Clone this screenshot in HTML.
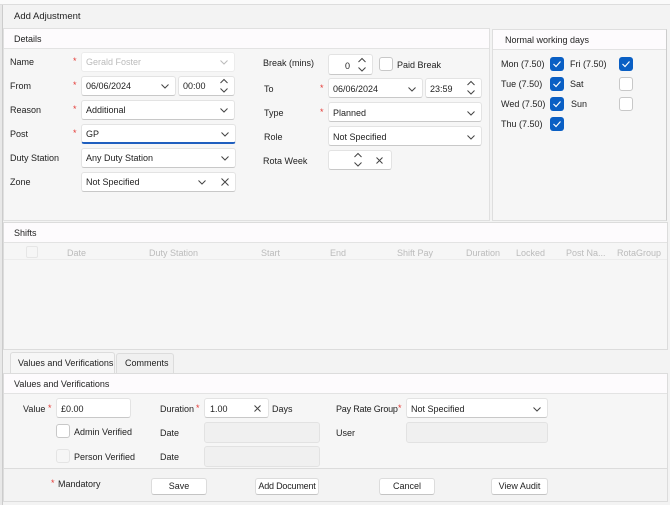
<!DOCTYPE html>
<html><head><meta charset="utf-8"><style>
*{box-sizing:border-box;margin:0;padding:0}
body{width:670px;height:505px;background:#f3f3f3;font-family:"Liberation Sans",sans-serif;font-size:9px;color:#222;position:relative;overflow:hidden}
.a{position:absolute}
.box{position:absolute;background:#fff;border:1px solid #e3e3e3;border-bottom-color:#c8c8c8;border-radius:3px}
.dis{position:absolute;background:#f0f0f0;border:1px solid #e2e2e2;border-radius:3px}
.t{position:absolute;white-space:nowrap}
.star{position:absolute;color:#e53935;font-size:9px}
.cb{position:absolute;width:14px;height:14px;border:1px solid #c8c8c8;border-radius:3px;background:#fff}
.cbon{position:absolute;width:14px;height:14px;border-radius:3px;background:#0a5fc4}
.hdr{position:absolute;background:#fdfbfd;border-bottom:1px solid #e3e3e3}
.btn{position:absolute;background:#fff;border:1px solid #dcdcdc;border-bottom-color:#c4c4c4;border-radius:3px;text-align:center;line-height:15px}
svg{position:absolute;overflow:visible}
.dn path,.sp path,.x path{fill:none;stroke:#444;stroke-width:1}
.ck path{fill:none;stroke:#fff;stroke-width:1.2}
</style></head><body>
<div class="a" style="left:0;top:0;width:670px;height:5px;background:#fafafa;border-bottom:1px solid #ddd"></div>
<div class="a" style="left:0;top:5px;width:3px;height:500px;background:#e8e8e8;border-right:1px solid #ccc"></div>
<div class="t" style="left:14px;top:11px;font-size:9.5px">Add Adjustment</div>

<div class="a" style="left:3px;top:28px;width:487px;height:193px;border:1px solid #e0e0e0;background:#f6f6f6"></div>
<div class="hdr" style="left:4px;top:29px;width:485px;height:20px"></div>
<div class="t" style="left:14px;top:34px">Details</div>

<div class="a" style="left:492px;top:29px;width:175px;height:192px;border:1px solid #dedede;border-right-color:#ccc;background:#f6f6f6"></div>
<div class="hdr" style="left:493px;top:30px;width:173px;height:20px"></div>
<div class="t" style="left:505px;top:35px">Normal working days</div>

<div class="t" style="left:10px;top:57px">Name</div>
<div class="t" style="left:10px;top:81px">From</div>
<div class="t" style="left:10px;top:105px">Reason</div>
<div class="t" style="left:10px;top:129px">Post</div>
<div class="t" style="left:10px;top:153px">Duty Station</div>
<div class="t" style="left:10px;top:177px">Zone</div>
<div class="star" style="left:73px;top:56px">*</div>
<div class="star" style="left:73px;top:80px">*</div>
<div class="star" style="left:73px;top:104px">*</div>
<div class="star" style="left:73px;top:128px">*</div>

<div class="box" style="left:81px;top:52px;width:154px;height:20px;border-color:#ececec"></div>
<div class="t" style="left:86px;top:57px;color:#bbb">Gerald Foster</div>
<svg class="dn" style="left:220px;top:60px" width="8" height="5"><path d="M0.5 0.5L4 4L7.5 0.5" style="stroke:#bbb"/></svg>

<div class="box" style="left:81px;top:76px;width:95px;height:20px"></div>
<div class="t" style="left:86px;top:81px">06/06/2024</div>
<svg class="dn" style="left:161px;top:84px" width="8" height="5"><path d="M0.5 0.5L4 4L7.5 0.5"/></svg>
<div class="box" style="left:178px;top:76px;width:57px;height:20px"></div>
<div class="t" style="left:183px;top:81px">00:00</div>
<svg class="sp" style="left:220px;top:79px" width="8" height="14"><path d="M0.5 4L4 0.5L7.5 4M0.5 9.5L4 13L7.5 9.5"/></svg>

<div class="box" style="left:81px;top:100px;width:154px;height:20px"></div>
<div class="t" style="left:86px;top:105px">Additional</div>
<svg class="dn" style="left:220px;top:108px" width="8" height="5"><path d="M0.5 0.5L4 4L7.5 0.5"/></svg>

<div class="box" style="left:81px;top:124px;width:155px;height:20px;border-bottom:2px solid #1f5fbf"></div>
<div class="t" style="left:86px;top:129px">GP</div>
<svg class="dn" style="left:221px;top:132px" width="8" height="5"><path d="M0.5 0.5L4 4L7.5 0.5"/></svg>

<div class="box" style="left:81px;top:148px;width:155px;height:20px"></div>
<div class="t" style="left:86px;top:153px">Any Duty Station</div>
<svg class="dn" style="left:221px;top:156px" width="8" height="5"><path d="M0.5 0.5L4 4L7.5 0.5"/></svg>

<div class="box" style="left:81px;top:172px;width:155px;height:20px"></div>
<div class="t" style="left:86px;top:177px">Not Specified</div>
<svg class="dn" style="left:198px;top:180px" width="8" height="5"><path d="M0.5 0.5L4 4L7.5 0.5"/></svg>
<svg class="x" style="left:221px;top:178px" width="8" height="8"><path d="M0.5 0.5L7.5 7.5M7.5 0.5L0.5 7.5"/></svg>

<div class="t" style="left:263px;top:58px">Break (mins)</div>
<div class="t" style="left:264px;top:84px">To</div>
<div class="t" style="left:264px;top:108px">Type</div>
<div class="t" style="left:264px;top:132px">Role</div>
<div class="t" style="left:263px;top:156px">Rota Week</div>
<div class="star" style="left:320px;top:83px">*</div>
<div class="star" style="left:320px;top:107px">*</div>

<div class="box" style="left:328px;top:54px;width:45px;height:21px"></div>
<div class="t" style="left:345px;top:61px">0</div>
<svg class="sp" style="left:358px;top:58px" width="8" height="14"><path d="M0.5 4L4 0.5L7.5 4M0.5 9.5L4 13L7.5 9.5"/></svg>
<div class="cb" style="left:379px;top:57px"></div>
<div class="t" style="left:397px;top:60px">Paid Break</div>

<div class="box" style="left:328px;top:78px;width:95px;height:20px"></div>
<div class="t" style="left:333px;top:84px">06/06/2024</div>
<svg class="dn" style="left:408px;top:87px" width="8" height="5"><path d="M0.5 0.5L4 4L7.5 0.5"/></svg>
<div class="box" style="left:425px;top:78px;width:57px;height:20px"></div>
<div class="t" style="left:430px;top:84px">23:59</div>
<svg class="sp" style="left:467px;top:81px" width="8" height="14"><path d="M0.5 4L4 0.5L7.5 4M0.5 9.5L4 13L7.5 9.5"/></svg>

<div class="box" style="left:328px;top:102px;width:154px;height:20px"></div>
<div class="t" style="left:333px;top:108px">Planned</div>
<svg class="dn" style="left:467px;top:111px" width="8" height="5"><path d="M0.5 0.5L4 4L7.5 0.5"/></svg>
<div class="box" style="left:328px;top:126px;width:154px;height:20px"></div>
<div class="t" style="left:333px;top:132px">Not Specified</div>
<svg class="dn" style="left:467px;top:135px" width="8" height="5"><path d="M0.5 0.5L4 4L7.5 0.5"/></svg>
<div class="box" style="left:328px;top:150px;width:64px;height:20px"></div>
<svg class="sp" style="left:354px;top:153px" width="8" height="14"><path d="M0.5 4L4 0.5L7.5 4M0.5 9.5L4 13L7.5 9.5"/></svg>
<svg class="x" style="left:376px;top:157px" width="7" height="7"><path d="M0.5 0.5L6.5 6.5M6.5 0.5L0.5 6.5"/></svg>

<div class="t" style="left:501px;top:59px">Mon (7.50)</div>
<div class="t" style="left:501px;top:79px">Tue (7.50)</div>
<div class="t" style="left:501px;top:99px">Wed (7.50)</div>
<div class="t" style="left:501px;top:119px">Thu (7.50)</div>
<div class="t" style="left:570px;top:59px">Fri (7.50)</div>
<div class="t" style="left:570px;top:79px">Sat</div>
<div class="t" style="left:571px;top:99px">Sun</div>
<div class="cbon" style="left:550px;top:57px"></div><svg class="ck" style="left:553px;top:61px" width="8" height="6"><path d="M0.5 3L3 5.5L7.5 0.5"/></svg>
<div class="cbon" style="left:550px;top:77px"></div><svg class="ck" style="left:553px;top:81px" width="8" height="6"><path d="M0.5 3L3 5.5L7.5 0.5"/></svg>
<div class="cbon" style="left:550px;top:97px"></div><svg class="ck" style="left:553px;top:101px" width="8" height="6"><path d="M0.5 3L3 5.5L7.5 0.5"/></svg>
<div class="cbon" style="left:550px;top:117px"></div><svg class="ck" style="left:553px;top:121px" width="8" height="6"><path d="M0.5 3L3 5.5L7.5 0.5"/></svg>
<div class="cbon" style="left:619px;top:57px"></div><svg class="ck" style="left:622px;top:61px" width="8" height="6"><path d="M0.5 3L3 5.5L7.5 0.5"/></svg>
<div class="cb" style="left:619px;top:77px"></div>
<div class="cb" style="left:619px;top:97px"></div>

<div class="a" style="left:3px;top:222px;width:665px;height:128px;border:1px solid #dcdcdc;background:#f6f6f6"></div>
<div class="hdr" style="left:4px;top:223px;width:663px;height:20px"></div>
<div class="t" style="left:14px;top:228px">Shifts</div>
<div class="a" style="left:4px;top:259px;width:663px;height:1px;background:#ececec"></div>
<div class="a" style="left:26px;top:246px;width:12px;height:12px;border:1px solid #e6e6e6;border-radius:2px"></div>
<div class="t" style="left:67px;top:248px;color:#bbb">Date</div>
<div class="t" style="left:149px;top:248px;color:#bbb">Duty Station</div>
<div class="t" style="left:261px;top:248px;color:#bbb">Start</div>
<div class="t" style="left:330px;top:248px;color:#bbb">End</div>
<div class="t" style="left:397px;top:248px;color:#bbb">Shift Pay</div>
<div class="t" style="left:466px;top:248px;color:#bbb">Duration</div>
<div class="t" style="left:516px;top:248px;color:#bbb">Locked</div>
<div class="t" style="left:566px;top:248px;color:#bbb">Post Na...</div>
<div class="t" style="left:617px;top:248px;color:#bbb">RotaGroup</div>

<div class="a" style="left:10px;top:352px;width:105px;height:22px;border:1px solid #dcdcdc;border-bottom:none;border-radius:3px 3px 0 0;background:#f6f6f6"></div>
<div class="t" style="left:18px;top:358px">Values and Verifications</div>
<div class="a" style="left:116px;top:353px;width:58px;height:20px;border:1px solid #dcdcdc;border-bottom:none;border-radius:3px 3px 0 0;background:#f0f0f0"></div>
<div class="t" style="left:125px;top:358px">Comments</div>

<div class="a" style="left:3px;top:373px;width:665px;height:96px;border:1px solid #dcdcdc;background:#f6f6f6"></div>
<div class="hdr" style="left:4px;top:374px;width:663px;height:20px"></div>
<div class="t" style="left:14px;top:379px">Values and Verifications</div>

<div class="t" style="left:23px;top:404px">Value</div>
<div class="star" style="left:48px;top:403px">*</div>
<div class="box" style="left:56px;top:398px;width:75px;height:20px"></div>
<div class="t" style="left:61px;top:404px">£0.00</div>
<div class="cb" style="left:56px;top:424px"></div>
<div class="t" style="left:74px;top:427px">Admin Verified</div>
<div class="a" style="left:56px;top:449px;width:14px;height:14px;border:1px solid #e4e4e4;border-radius:3px"></div>
<div class="t" style="left:74px;top:452px">Person Verified</div>

<div class="t" style="left:160px;top:404px">Duration</div>
<div class="star" style="left:196px;top:403px">*</div>
<div class="box" style="left:204px;top:398px;width:65px;height:20px"></div>
<div class="t" style="left:210px;top:404px">1.00</div>
<svg class="x" style="left:254px;top:405px" width="7" height="7"><path d="M0.5 0.5L6.5 6.5M6.5 0.5L0.5 6.5"/></svg>
<div class="t" style="left:272px;top:404px">Days</div>
<div class="t" style="left:160px;top:428px">Date</div>
<div class="dis" style="left:204px;top:422px;width:116px;height:21px"></div>
<div class="t" style="left:160px;top:452px">Date</div>
<div class="dis" style="left:204px;top:446px;width:116px;height:21px"></div>

<div class="t" style="left:336px;top:404px;letter-spacing:-0.2px">Pay Rate Group</div>
<div class="star" style="left:398px;top:403px">*</div>
<div class="box" style="left:406px;top:398px;width:142px;height:20px"></div>
<div class="t" style="left:411px;top:404px">Not Specified</div>
<svg class="dn" style="left:533px;top:407px" width="8" height="5"><path d="M0.5 0.5L4 4L7.5 0.5"/></svg>
<div class="t" style="left:336px;top:428px">User</div>
<div class="dis" style="left:406px;top:422px;width:142px;height:21px"></div>

<div class="a" style="left:3px;top:469px;width:665px;height:33px;border:1px solid #dcdcdc;border-top:none;background:#f3f3f3"></div>
<div class="star" style="left:51px;top:478px">*</div>
<div class="t" style="left:58px;top:479px">Mandatory</div>
<div class="btn" style="left:151px;top:478px;width:56px;height:17px">Save</div>
<div class="btn" style="left:255px;top:478px;width:64px;height:17px;letter-spacing:-0.2px">Add Document</div>
<div class="btn" style="left:379px;top:478px;width:56px;height:17px">Cancel</div>
<div class="btn" style="left:491px;top:478px;width:57px;height:17px">View Audit</div>
</body></html>
